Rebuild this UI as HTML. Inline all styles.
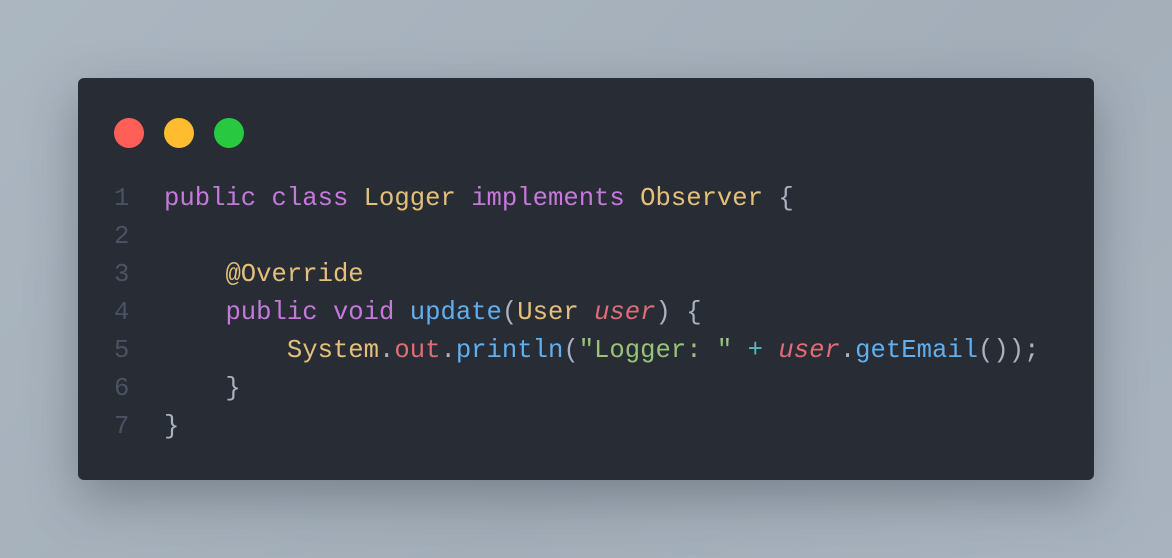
<!DOCTYPE html>
<html><head><meta charset="utf-8"><style>
html,body{margin:0;padding:0}
body{width:1172px;height:558px;background:linear-gradient(135deg,#abb6c1,#a3aeb9 60%,#a8b3bf);position:relative;overflow:hidden}
.card{position:absolute;left:78px;top:78px;width:1016px;height:402px;background:#282c34;border-radius:6px;box-shadow:0 18px 50px rgba(40,50,60,.35)}
.dot{position:absolute;top:40px;width:30px;height:30px;border-radius:50%}
pre{position:absolute;left:0;top:102px;margin:0;font-family:"Liberation Mono",monospace;font-size:25.6px;line-height:38px;color:#abb2bf}
.ln{display:inline-block;width:86px;text-align:left;padding-left:36px;box-sizing:border-box;color:#4b5263}
.k{color:#c678dd}.t{color:#e5c07b}.f{color:#61afef}.v{color:#e06c75;font-style:italic}.s{color:#98c379}.o{color:#e06c75}.op{color:#56b6c2}
</style></head><body>
<div class="card">
<div class="dot" style="left:36px;background:#ff5f57"></div>
<div class="dot" style="left:86px;background:#febc2e"></div>
<div class="dot" style="left:136px;background:#28c840"></div>
<pre><span class="ln">1</span><span class="k">public</span> <span class="k">class</span> <span class="t">Logger</span> <span class="k">implements</span> <span class="t">Observer</span> {
<span class="ln">2</span>
<span class="ln">3</span>    <span class="t">@Override</span>
<span class="ln">4</span>    <span class="k">public</span> <span class="k">void</span> <span class="f">update</span>(<span class="t">User</span> <span class="v">user</span>) {
<span class="ln">5</span>        <span class="t">System</span>.<span class="o">out</span>.<span class="f">println</span>(<span class="s">"Logger: "</span> <span class="op">+</span> <span class="v">user</span>.<span class="f">getEmail</span>());
<span class="ln">6</span>    }
<span class="ln">7</span>}</pre>
</div>
</body></html>
